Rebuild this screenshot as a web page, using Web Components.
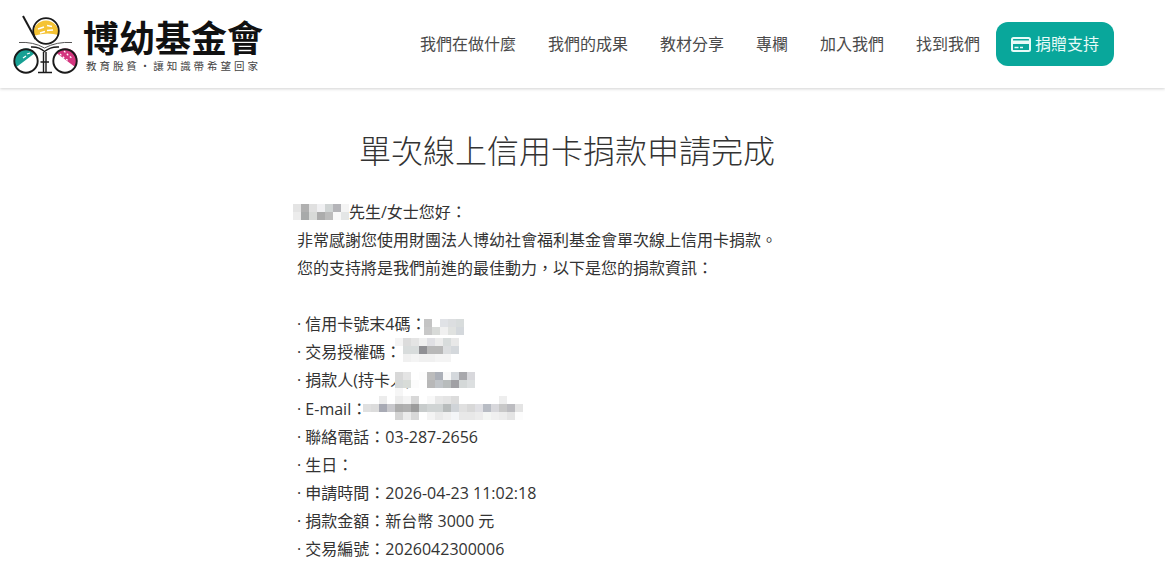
<!DOCTYPE html>
<html lang="zh-Hant">
<head>
<meta charset="utf-8">
<title>單次線上信用卡捐款申請完成</title>
<style>
html,body{margin:0;padding:0;background:#fff;overflow:hidden;height:565px}
body{font-family:"Open Sans","Noto Sans CJK TC",sans-serif;color:#333}
</style>
</head>
<body>
<site-header>
  <nav-link>我們在做什麼</nav-link>
  <nav-link>我們的成果</nav-link>
  <nav-link>教材分享</nav-link>
  <nav-link>專欄</nav-link>
  <nav-link>加入我們</nav-link>
  <nav-link>找到我們</nav-link>
  <donate-button>捐贈支持</donate-button>
</site-header>
<receipt-page heading="單次線上信用卡捐款申請完成">
  <info-line><blur-block w="52" dx="-4" dy="-14" rows="e4e4e4 b0b0b0 e0e0e0 f0f0f2 d0d4d4 b4b4b8 f4f4f4|ececec a8aaaa d8dad8 acacac bcbcbc f8f8f8 e4e6e6"></blur-block>先生/女士您好：</info-line>
  <info-line>非常感謝您使用財團法人博幼社會福利基金會單次線上信用卡捐款。</info-line>
  <info-line>您的支持將是我們前進的最佳動力，以下是您的捐款資訊：</info-line>
  <info-line>&nbsp;</info-line>
  <info-line>· 信用卡號末4碼：<blur-block dx="-3" dy="-11" rows="c4c4c4 ffffff e0e2e6 dcdee0 d8dcdc|c8c8c8 d8dad8 f0f0f0 e0e2e0 d4d8dc"></blur-block></info-line>
  <info-line>· 交易授權碼：<blur-block dx="-6" dy="-20" rows="f4f4f4 dcdcdc e4e4e4 f0f0f0 e0e0e4 ececec d8dcdc e8e8e8|- d8dcdc d8dcdc 909094 b8b8b8 b8b8b8 dcdee0 d4d8dc|- f0f0f0 f4f4f4 f0f0f0 f0f0f0 f4f4f4 f4f4f4 ffffff"></blur-block></info-line>
  <info-line>· 捐款人(持卡人)：<blur-block dx="-32" dy="-14" rows="d8d8d8 e4e4e4 ffffff fcfcfc bcbcbc acb0b8 f8f8f8 d4d8dc a8a8ac d8d8dc|d4d8d8 d8dcd8 fcfcfc ffffff b8b8b8 c0c4c8 b8bcbc a0a0a4 d4d8d8 dcdfe0|f6f6f6 - - - - - - - - -"></blur-block></info-line>
  <info-line>· E-mail：<blur-block dx="-4" dy="-19" rows="- - ececec - ececec f4f4f4 d8d8d8 - f8f8f8 e8e8e8 e4e4e4 dcdcdc - - - - - eeeeee - -|e0e0e0 dcdcdc a8aab4 c8c8cc acacac b0b0b0 9c9c9c c8cccc d0d4d4 d0d4d4 b8bcbc d0d4d8 e0e0e0 d8d8d8 e0e0e4 b8bcc4 d8d8dc c8c8c8 bcbcc0 e4e4e4|- - - - d4d4d4 ececec d8d8d8 ffffff f4f4f4 eaeaea f0f0f0 f4f6f8 e8e8e8 e8e8e8 ececec f4f6f4 f0f0f0 ececec e4e4e4 fcfcfc"></blur-block></info-line>
  <info-line>· 聯絡電話：03-287-2656</info-line>
  <info-line>· 生日：</info-line>
  <info-line>· 申請時間：2026-04-23 11:02:18</info-line>
  <info-line>· 捐款金額：新台幣 3000 元</info-line>
  <info-line>· 交易編號：2026042300006</info-line>
</receipt-page>
<script>
function def(name, css, html, extra){
  customElements.define(name, class extends HTMLElement{
    constructor(){
      super();
      const r=this.attachShadow({mode:"open"});
      r.innerHTML="<style>"+css+"</style>"+html;
    }
    connectedCallback(){ if(extra) extra(this); }
  });
}
const logo=`<svg width="80" height="66" viewBox="0 0 80 66" aria-hidden="true">
  <g transform="translate(-13,-13)">
    <path d="M33.300 35a12.800 12.800 0 1 1 25.400 0q-12.700-3.500-25.400 1z" fill="#f5c334"/>
    <path d="M38 29l6-2M47 25.500l5 1M40 33l5-1.500M47 30.500l6-.5" stroke="#fff" stroke-width="1.400" fill="none"/>
    <circle cx="46" cy="31" r="12.800" fill="none" stroke="#1a1a1a" stroke-width="1.800"/>
    <path d="M23 16 35.500 39" stroke="#1a1a1a" stroke-width="2" fill="none"/>
    <path d="M19 42.500q14-1 25.500 5.500 12-6.500 27.500-5.500" stroke="#555" stroke-width="1" fill="none"/>
    <path d="M31 47q8-.5 13.500 4.500 6-5 14.500-4.500" stroke="#1a1a1a" stroke-width="1.400" fill="none"/>
    <path d="M16.500 67a11.500 11.500 0 0 1 18.500-14z" fill="#17a094"/>
    <path d="M56.500 53a11.500 11.500 0 0 1 18.500 14z" fill="#d4367f"/>
    <path d="M60 54l4 4 5 3M64 51l4 4 5 4" stroke="#fff" stroke-width="1.300" stroke-dasharray="2 2" fill="none"/>
    <path d="M23 58l3-2M27 54l3-1" stroke="#fff" stroke-width="1.300" fill="none"/>
    <circle cx="26" cy="61" r="11.700" fill="none" stroke="#1a1a1a" stroke-width="1.900"/>
    <circle cx="65" cy="61" r="11.700" fill="none" stroke="#1a1a1a" stroke-width="1.900"/>
    <path d="M43.500 52v20M46 52v20M40.500 62h8.500M38 72.500h14" stroke="#1a1a1a" stroke-width="1.400" fill="none"/>
  </g>
</svg>`;
def("site-header",`
  :host{display:flex;align-items:center;height:88px;padding:0 51px 0 13px;background:#fff;box-shadow:0 1px 3px rgba(0,0,0,.18);position:relative;box-sizing:border-box}
  .brand{display:flex;align-items:flex-start;gap:0}
  svg{display:block;flex:none;margin-top:4px;margin-right:-9px}
  .names{display:flex;flex-direction:column;margin-top:7px}
  .name{font:700 36px/40px "Noto Sans CJK TC",sans-serif;color:#111;white-space:nowrap;margin-left:-1px}
  .slogan{font:400 10.500px/14px "Noto Sans CJK TC",sans-serif;letter-spacing:2.950px;color:#444;white-space:nowrap;margin:3px 0 0 2px}
  nav{display:flex;align-items:center;margin-left:auto}
`,`<div class="brand">${logo}<div class="names"><div class="name">博幼基金會</div><div class="slogan">教育脫貧・讓知識帶希望回家</div></div></div><nav><slot></slot></nav>`);
def("nav-link",`
  :host{display:block;padding:0 16px;margin-top:-3px;font:400 16px/24px "Noto Sans CJK TC",sans-serif;color:#4a4a4a;white-space:nowrap}
`,`<slot></slot>`);
def("donate-button",`
  :host{display:flex;align-items:center;gap:4px;height:44px;width:118px;box-sizing:border-box;padding-left:15px;border-radius:12px;background:#09a79b;color:#e8fbf8;font:400 16px/24px "Noto Sans CJK TC",sans-serif;white-space:nowrap}
  svg{display:block;flex:none}
  span{display:block;margin-top:-2px}
`,`<svg width="20" height="15" viewBox="0 0 20 15" aria-hidden="true"><rect x="1" y="1" width="18" height="13" rx="1.500" fill="none" stroke="currentColor" stroke-width="2"/><rect x="1" y="3.500" width="18" height="3.500" fill="currentColor"/><path d="M3.500 10.500h4M9 10.500h3" stroke="currentColor" stroke-width="1.500"/></svg><span><slot></slot></span>`);
def("receipt-page",`
  :host{display:block;width:540px;margin-left:297px;color:#333}
  h1{margin:41px 0 29px;font:300 32px/40px "Noto Sans CJK TC",sans-serif;color:#333;text-align:center;white-space:nowrap}
  .body{display:block}
`,`<h1></h1><div class="body"><slot></slot></div>`,el=>{el.shadowRoot.querySelector("h1").textContent=el.getAttribute("heading")});
def("info-line",`
  :host{display:block;font:400 16px/28.080px "Open Sans","Noto Sans CJK TC",sans-serif;color:#333;white-space:nowrap;height:28.080px}
`,`<slot></slot>`);
def("blur-block",`
  :host{display:inline-block;position:relative;height:0;vertical-align:baseline}
  .m{position:absolute;display:grid;grid-auto-rows:8px;grid-auto-columns:8px;z-index:1}
  i{display:block;width:8px;height:8px}
`,`<div class="m"></div>`,el=>{
  el.style.width=(el.getAttribute("w")||0)+"px";
  const m=el.shadowRoot.querySelector(".m");
  m.style.left=(el.getAttribute("dx")||0)+"px";
  m.style.top=(el.getAttribute("dy")||0)+"px";
  el.getAttribute("rows").split("|").forEach((row,y)=>row.split(" ").forEach((c,x)=>{
    if(c==="-")return;
    const i=document.createElement("i");
    i.style.background="#"+c;i.style.gridRow=y+1;i.style.gridColumn=x+1;
    m.appendChild(i);
  }));
});
</script>
</body>
</html>
